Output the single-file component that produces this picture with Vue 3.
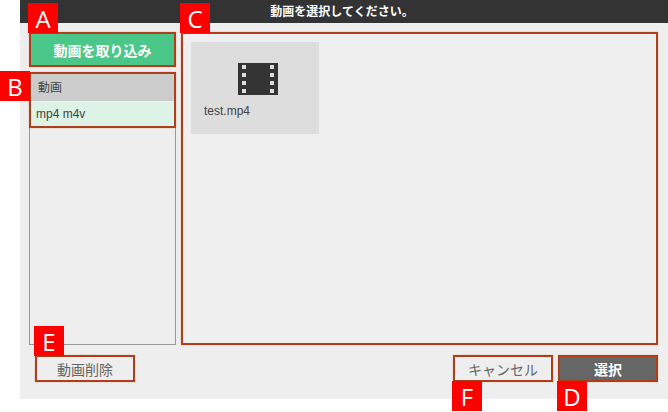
<script setup>
const holes = [2, 10, 18, 26]
const badges = [
  { id: 'A', cls: 'ba' },
  { id: 'B', cls: 'bb' },
  { id: 'C', cls: 'bc' },
  { id: 'E', cls: 'be' },
  { id: 'F', cls: 'bf' },
  { id: 'D', cls: 'bd' },
]
</script>

<template>
  <div class="page">
    <div class="dialog">
      <header class="title">動画を選択してください。</header>
      <div class="body">
        <div class="main">
          <aside class="side">
            <button class="import mark">動画を取り込み</button>
            <div class="listbox">
              <div class="cats mark">
                <div class="cat-head">動画</div>
                <div class="cat-sub">mp4 m4v</div>
              </div>
            </div>
          </aside>
          <section class="files mark">
            <div class="thumb">
              <svg class="film" width="40" height="32" viewBox="0 0 40 32">
                <rect width="40" height="32" fill="#333" />
                <template v-for="y in holes" :key="y">
                  <rect x="4" :y="y" width="4" height="4" fill="#ddd" />
                  <rect x="32" :y="y" width="4" height="4" fill="#ddd" />
                </template>
              </svg>
              <div class="name">test.mp4</div>
            </div>
          </section>
        </div>
        <footer class="foot">
          <button class="btn mark">動画削除</button>
          <div class="right">
            <button class="btn mark cancel">キャンセル</button>
            <button class="btn mark select">選択</button>
          </div>
        </footer>
      </div>
    </div>
    <span v-for="b in badges" :key="b.id" class="badge" :class="b.cls">{{ b.id }}</span>
  </div>
</template>

<style scoped>
.page {
  position: relative;
  width: 668px;
  height: 412px;
  background: #fff;
  overflow: hidden;
  font-family: "Liberation Sans", "Noto Sans CJK JP", sans-serif;
  color: #444;
}
.dialog {
  margin-left: 20px;
  width: 648px;
  height: 399px;
  background: #eee;
  display: flex;
  flex-direction: column;
}
.title {
  height: 23px;
  background: #333;
  color: #fff;
  font-size: 12px;
  font-weight: 700;
  line-height: 25px;
  text-align: center;
  padding-right: 4px;
  flex: none;
}
.body {
  padding: 9px 10px 0 9px;
  display: flex;
  flex-direction: column;
}
.main {
  display: flex;
  gap: 5px;
  height: 313px;
}
.side {
  width: 147px;
  display: flex;
  flex-direction: column;
  gap: 5px;
}
.mark {
  border: 2px solid #ad3f1c;
  box-shadow: 0 0 1px #d98a6a;
  box-sizing: border-box;
}
.import {
  height: 35px;
  background: #4cc78a;
  color: #fff;
  font: 700 14px "Liberation Sans", "Noto Sans CJK JP", sans-serif;
  padding: 0;
}
.listbox {
  flex: 1;
  border: 1px solid #999;
  border-top: 0;
}
.cats {
  margin: 0 -1px;
  height: 56px;
  font-size: 12px;
}
.cat-head {
  height: 27px;
  line-height: 28px;
  background: #ccc;
  padding-left: 7px;
}
.cat-sub {
  height: 25px;
  line-height: 26px;
  background: #dcf3e6;
  padding-left: 5px;
}
.files {
  flex: 1;
  padding: 8px;
  background: #efefef;
}
.thumb {
  width: 128px;
  height: 92px;
  background: #ddd;
  display: flex;
  flex-direction: column;
  padding: 21px 0 0 13px;
  box-sizing: border-box;
}
.film {
  display: block;
  margin-left: 34px;
}
.name {
  margin-top: 9px;
  font-size: 12px;
  line-height: 14px;
}
.foot {
  margin-top: 10px;
  padding-left: 6px;
  display: flex;
  justify-content: space-between;
}
.right {
  display: flex;
  gap: 5px;
}
.btn {
  width: 100px;
  height: 27px;
  background: transparent;
  color: #666;
  font: 14px "Liberation Sans", "Noto Sans CJK JP", sans-serif;
  padding: 0;
}
.select {
  background: #666;
  color: #fff;
  font-weight: 700;
}
.badge {
  position: absolute;
  width: 30px;
  height: 30px;
  background: #f00;
  color: #fff;
  font: 24px/31px "Open Sans", sans-serif;
  text-align: center;
}
.ba { left: 28px; top: 3px; }
.bb { left: 0; top: 71px; }
.bc { left: 180px; top: 3px; }
.be { left: 34px; top: 326px; }
.bf { left: 452px; top: 381px; }
.bd { left: 557px; top: 381px; }
</style>
